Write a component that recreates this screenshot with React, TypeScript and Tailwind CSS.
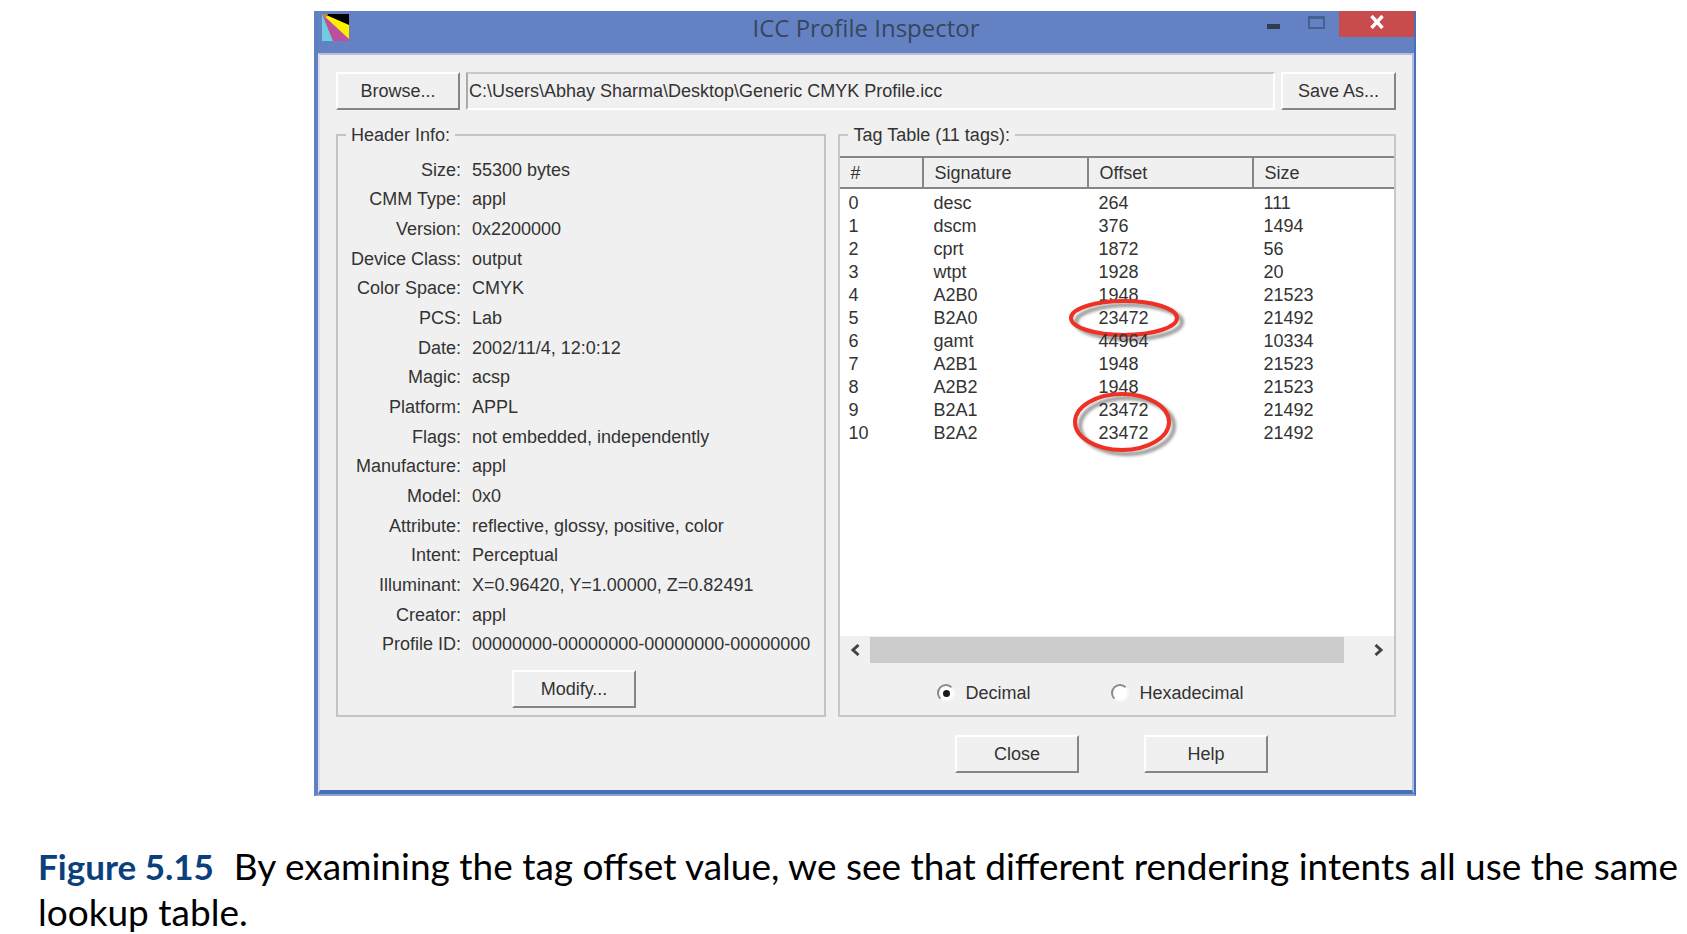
import React, { useState } from "react";

const headerInfo: [string, string][] = [
  ["Size:", "55300 bytes"],
  ["CMM Type:", "appl"],
  ["Version:", "0x2200000"],
  ["Device Class:", "output"],
  ["Color Space:", "CMYK"],
  ["PCS:", "Lab"],
  ["Date:", "2002/11/4, 12:0:12"],
  ["Magic:", "acsp"],
  ["Platform:", "APPL"],
  ["Flags:", "not embedded, independently"],
  ["Manufacture:", "appl"],
  ["Model:", "0x0"],
  ["Attribute:", "reflective, glossy, positive, color"],
  ["Intent:", "Perceptual"],
  ["Illuminant:", "X=0.96420, Y=1.00000, Z=0.82491"],
  ["Creator:", "appl"],
  ["Profile ID:", "00000000-00000000-00000000-00000000"],
];

const tags: [string, string, string, string][] = [
  ["0", "desc", "264", "111"],
  ["1", "dscm", "376", "1494"],
  ["2", "cprt", "1872", "56"],
  ["3", "wtpt", "1928", "20"],
  ["4", "A2B0", "1948", "21523"],
  ["5", "B2A0", "23472", "21492"],
  ["6", "gamt", "44964", "10334"],
  ["7", "A2B1", "1948", "21523"],
  ["8", "A2B2", "1948", "21523"],
  ["9", "B2A1", "23472", "21492"],
  ["10", "B2A2", "23472", "21492"],
];

function PushButton({ children, className = "" }: { children: React.ReactNode; className?: string }) {
  return (
    <button
      type="button"
      className={`h-[38px] shrink-0 border-2 border-t-white border-l-white border-r-[#858585] border-b-[#858585] bg-[#f0f0f0] leading-5 ${className}`}
    >
      {children}
    </button>
  );
}

function Ring({ rx, ry, className }: { rx: number; ry: number; className: string }) {
  const w = rx * 2 + 20;
  const h = ry * 2 + 20;
  return (
    <svg width={w} height={h} className={`pointer-events-none absolute ${className}`} aria-hidden="true">
      <defs>
        <filter id={`soft-${rx}`} x="-20%" y="-40%" width="140%" height="180%">
          <feGaussianBlur stdDeviation="1.5" />
        </filter>
      </defs>
      <ellipse cx={w / 2 + 5} cy={h / 2 + 4} rx={rx} ry={ry} fill="none" stroke="#000" strokeOpacity="0.4" strokeWidth="4" filter={`url(#soft-${rx})`} />
      <ellipse cx={w / 2} cy={h / 2} rx={rx} ry={ry} fill="none" stroke="#ee3124" strokeWidth="4" />
    </svg>
  );
}

function Radio({ label, checked, onChange }: { label: string; checked: boolean; onChange: () => void }) {
  return (
    <label className="flex items-center gap-[10px]">
      <span className="relative flex size-[18px]">
        <input
          type="radio"
          name="base"
          checked={checked}
          onChange={onChange}
          className="size-[18px] appearance-none rounded-full border-2 border-[#8a8a8a] border-r-[#f8f8f8] border-b-[#f8f8f8] bg-white"
        />
        {checked && <span className="pointer-events-none absolute top-[6px] left-[6px] size-[7px] rounded-full bg-[#1c1c1c]" />}
      </span>
      {label}
    </label>
  );
}

export default function App() {
  const [base, setBase] = useState("dec");
  return (
    <main className="overflow-hidden bg-white pt-[11px]">
      <div className="flex justify-center pl-[43px]">
        <section className="w-full max-w-[1102px] border-r-2 border-b-2 border-l-4 border-r-[#4a6fb9] border-b-[#8aa2d4] border-l-[#6080c1] bg-[#6482c3] font-['Liberation_Sans',Arial,sans-serif] text-[18px] leading-5 text-[#333]">
          <header className="flex h-[42px] items-start">
            <div className="flex w-[170px] pt-[3px] pl-1">
              <svg width="27" height="27" viewBox="0 0 27 27" aria-hidden="true">
                <path d="M0 0H27V27H0Z" fill="#6fcde0" />
                <path d="M0 0L11 27H27V0Z" fill="#bd4f9c" />
                <path d="M0 0L27 25V0Z" fill="#fff000" />
                <path d="M2 0L27 11V0Z" fill="#000" />
                <path d="M0 0H6L3 5Z" fill="#b98a3a" />
              </svg>
            </div>
            <h1 className="flex-1 pt-[3px] text-center font-['Open_Sans','Noto_Sans',sans-serif] text-[24px] leading-7 text-[#38465c]">
              ICC Profile Inspector
            </h1>
            <div className="flex w-[170px] justify-end">
              <button type="button" aria-label="Minimize" className="flex h-[26px] w-10 items-start justify-center pt-[13px]">
                <svg width="13" height="5"><path d="M0 0H13V5H0Z" fill="#2f3c50" /></svg>
              </button>
              <button type="button" aria-label="Maximize" className="flex h-[26px] w-[46px] items-start justify-center pt-1">
                <svg width="17" height="14"><path d="M1 2H16V13H1Z" fill="none" stroke="#47608f" strokeWidth="2" /><path d="M0 1H17V4H0Z" fill="#47608f" /></svg>
              </button>
              <button type="button" aria-label="Close window" className="flex h-[26px] w-[75px] items-start justify-center bg-[#c84c4d] pt-1">
                <svg width="14" height="14" viewBox="0 0 14 14"><path d="M1.5 1L12.5 13M12.5 1L1.5 13" stroke="#fff" strokeWidth="3.4" /></svg>
              </button>
            </div>
          </header>

          <div className="border-t-2 border-r-2 border-b-4 border-l-2 border-t-[#b4bfdd] border-r-[#aebddd] border-b-[#4a6fb9] border-l-[#dcdfeb] bg-[#f0f0f0] px-4 pt-[17px] pb-[17px]">
            <div className="flex gap-[6px]">
              <PushButton className="w-[124px]">Browse...</PushButton>
              <input
                aria-label="Profile path"
                readOnly
                value="C:\Users\Abhay Sharma\Desktop\Generic CMYK Profile.icc"
                className="h-[38px] min-w-0 flex-1 border-2 border-t-[#c8c8c8] border-r-white border-b-white border-l-[#aaa] bg-[#f0f0f0] px-px outline-none"
              />
              <PushButton className="w-[115px]">Save As...</PushButton>
            </div>

            <div className="mt-[15px] grid grid-cols-[490fr_557fr] gap-3">
              <fieldset className="min-w-0 border-2 border-[#c4c4c4]">
                <legend className="ml-2 px-[5px]">Header Info:</legend>
                <dl className="mt-[10px] grid h-[504px] grid-cols-[123px_1fr] grid-rows-[repeat(17,1fr)] items-center gap-x-[11px]">
                  {headerInfo.map(([k, v]) => (
                    <React.Fragment key={k}>
                      <dt className="text-right whitespace-nowrap">{k}</dt>
                      <dd className="whitespace-nowrap">{v}</dd>
                    </React.Fragment>
                  ))}
                </dl>
                <div className="mt-[11px] mb-[5px] flex pl-[174px]">
                  <PushButton className="w-[124px]">Modify...</PushButton>
                </div>
              </fieldset>

              <fieldset className="min-w-0 border-2 border-[#c8c8c8]">
                <legend className="ml-2 px-[5px]">Tag Table (11 tags):</legend>
                <div className="mt-[11px] flex h-[508px] flex-col bg-white">
                  <table className="w-full table-fixed border-collapse text-left">
                    <colgroup>
                      <col className="w-[83px]" />
                      <col className="w-[165px]" />
                      <col className="w-[165px]" />
                      <col />
                    </colgroup>
                    <thead>
                      <tr className="h-[31px] border-t-2 border-b-2 border-[#868686] bg-[#f0f0f0]">
                        {["#", "Signature", "Offset", "Size"].map((h) => (
                          <th key={h} scope="col" className="border-r-2 border-[#868686] px-[10px] font-normal last:border-r-0">{h}</th>
                        ))}
                      </tr>
                    </thead>
                    <tbody>
                      <tr className="h-[3px]"><td colSpan={4} /></tr>
                      {tags.map(([n, sig, off, size]) => (
                        <tr key={n} className="h-[23px]">
                          <td className="pl-2">{n}</td>
                          <td className="pl-[10px]">{sig}</td>
                          <td className="pl-[10px]">
                            <span className="relative">
                              {off}
                              {n === "5" && <Ring rx={53} ry={17} className="-top-[17px] -left-[37px]" />}
                              {n === "9" && <Ring rx={47} ry={28} className="-top-[16px] -left-[33px]" />}
                            </span>
                          </td>
                          <td className="pl-[10px]">{size}</td>
                        </tr>
                      ))}
                    </tbody>
                  </table>
                  <div className="mt-auto flex h-7 items-center bg-[#f0f0f0]">
                    <button type="button" aria-label="Scroll left" className="flex w-[30px] justify-center">
                      <svg width="10" height="12" viewBox="0 0 10 12"><path d="M8.5 1L3 6L8.5 11" fill="none" stroke="#444" strokeWidth="3" /></svg>
                    </button>
                    <div className="flex flex-1">
                      <div className="h-[26px] w-[96%] bg-[#cbcbcb]" />
                    </div>
                    <button type="button" aria-label="Scroll right" className="flex w-[30px] justify-center">
                      <svg width="10" height="12" viewBox="0 0 10 12"><path d="M1.5 1L7 6L1.5 11" fill="none" stroke="#444" strokeWidth="3" /></svg>
                    </button>
                  </div>
                </div>
                <div className="flex h-[51px] items-center pt-[6px] pl-[97px]">
                  <div className="w-[174px]">
                    <Radio label="Decimal" checked={base === "dec"} onChange={() => setBase("dec")} />
                  </div>
                  <Radio label="Hexadecimal" checked={base === "hex"} onChange={() => setBase("hex")} />
                </div>
              </fieldset>
            </div>

            <div className="mt-[18px] flex justify-end gap-[65px] pr-[128px]">
              <PushButton className="w-[124px]">Close</PushButton>
              <PushButton className="w-[124px]">Help</PushButton>
            </div>
          </div>
        </section>
      </div>

      <p className="mt-[47px] pl-[38px] font-['Lato','Open_Sans',sans-serif] text-[37px] leading-[46px] text-black">
        <b className="mr-5 text-[35px] font-bold text-[#0b3f7d]">Figure 5.15</b>
        By examining the tag offset value, we see that different rendering intents all use the same lookup table.
      </p>
    </main>
  );
}
